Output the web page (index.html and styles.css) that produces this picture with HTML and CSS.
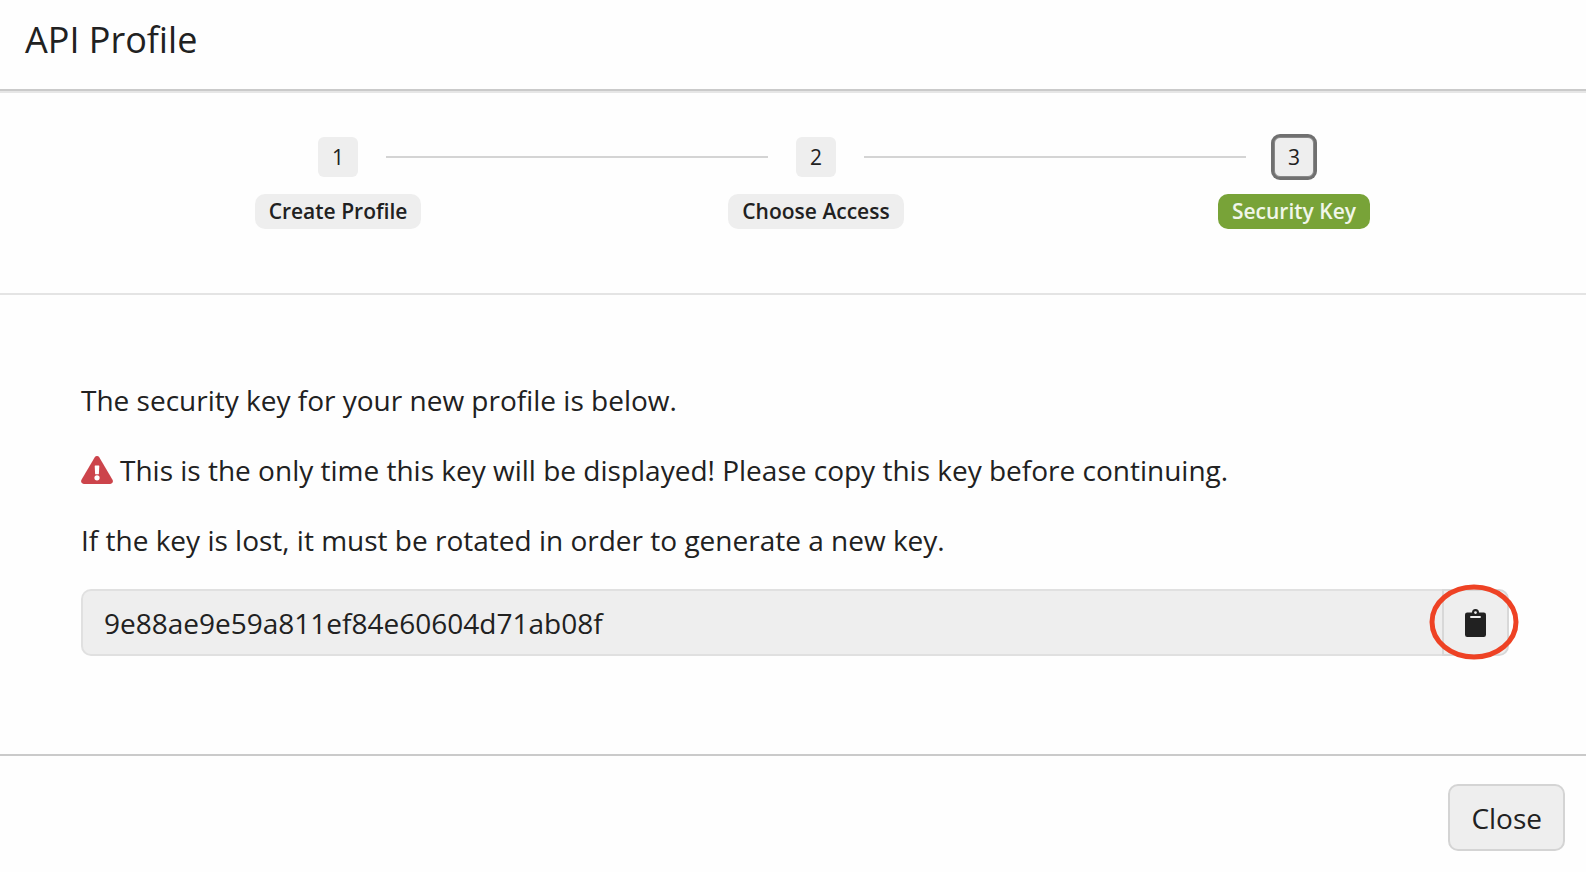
FILE: index.html
```html
<!DOCTYPE html>
<html lang="en">
<head>
    <meta charset="UTF-8">
    <title>API Profile</title>
    <link rel="stylesheet" href="styles.css">
</head>
<body>

<header class="header">
    <h1>API Profile</h1>
</header>

<!-- Progress -->
<ol class="steps">
    <li class="step">
        <div class="marker"><span class="number">1</span></div>
        <span class="label">Create Profile</span>
    </li>
    <li class="step">
        <div class="marker"><span class="number">2</span></div>
        <span class="label">Choose Access</span>
    </li>
    <li class="step active" aria-current="step">
        <div class="marker"><span class="number">3</span></div>
        <span class="label">Security Key</span>
    </li>
</ol>

<main class="content">
    <p><label for="key">The security key for your new profile is below.</label></p>
    <p class="warning">
        <svg class="warning-icon" viewBox="0 0 32 28" aria-hidden="true">
            <path fill="#cc444b" d="M13.6 1.4a2.8 2.8 0 0 1 4.8 0l13.1 22.4a2.8 2.8 0 0 1-2.4 4.2H2.9a2.8 2.8 0 0 1-2.4-4.2z"/>
            <path fill="#fff" d="M14.2 9.5h3.6a.5.5 0 0 1 .5.5l-.4 7.8a.6.6 0 0 1-.6.5h-2.6a.6.6 0 0 1-.6-.5L13.7 10a.5.5 0 0 1 .5-.5z"/>
            <circle fill="#fff" cx="16" cy="21.8" r="2.6"/>
        </svg>
        <span>This is the only time this key will be displayed! Please copy this key before continuing.</span>
    </p>
    <p>If the key is lost, it must be rotated in order to generate a new key.</p>

    <div class="key-group">
        <input type="text" id="key" class="key" value="9e88ae9e59a811ef84e60604d71ab08f" readonly>
        <button type="button" class="copy" aria-label="Copy key">
            <svg class="copy-icon" viewBox="0 0 21 28" aria-hidden="true">
                <path fill="#212121" fill-rule="evenodd" d="M2.2 3.5h4.8a3.5 3.5 0 0 1 7 0h4.8A2.2 2.2 0 0 1 21 5.7v20.1a2.2 2.2 0 0 1-2.2 2.2H2.2A2.2 2.2 0 0 1 0 25.8V5.7a2.2 2.2 0 0 1 2.2-2.2zM10.5 2.2a1.4 1.4 0 1 0 0 2.8 1.4 1.4 0 0 0 0-2.8zM5.7 7a.5.5 0 0 0-.5.5v.9c0 .3.2.5.5.5h9.6c.3 0 .5-.2.5-.5v-.9a.5.5 0 0 0-.5-.5z"/>
            </svg>
        </button>
        <svg class="highlight" viewBox="0 0 90 76" aria-hidden="true">
            <ellipse cx="45" cy="38" rx="42" ry="35" fill="none" stroke="#ee4224" stroke-width="5"/>
        </svg>
    </div>
</main>

<footer class="footer">
    <button type="button" class="close">Close</button>
</footer>

</body>
</html>
```

FILE: styles.css
```css
* {
    box-sizing: border-box;
}
body {
    margin: 0;
    font-family: "Open Sans", sans-serif;
    font-size: 28px;
    line-height: 42px;
    color: #212121;
    background-color: #fefefe;
}
.header {
    padding: 16px 25px 26px;
    border-bottom: 2px solid #cacaca;
    box-shadow: 0 2px 0 #e6e6e6;
}
h1 {
    margin: 0;
    font-size: 36px;
    line-height: 47px;
    font-weight: 500;
}
/* Steps */
.steps {
    display: grid;
    grid-template-columns: repeat(3, 1fr);
    margin: 0;
    padding: 46px 53px 64px 99px;
    list-style: none;
    border-bottom: 2px solid #e4e4e4;
}
.step {
    display: flex;
    flex-direction: column;
    align-items: center;
    gap: 17px;
    font-size: 21px;
}
.marker {
    display: flex;
    align-items: center;
    gap: 28px;
    width: 100%;
}
.marker::before, .marker::after {
    content: "";
    flex: 1;
    height: 2px;
    background-color: #d4d4d4;
}
.step:first-child .marker::before,
.step:last-child .marker::after {
    background-color: transparent;
}
.number {
    width: 40px;
    height: 40px;
    border-radius: 6px;
    line-height: 40px;
    text-align: center;
    background-color: #eee;
}
.label {
    padding: 0 14px;
    border-radius: 10px;
    line-height: 35px;
    font-weight: 600;
    background-color: #eee;
}
.active .number {
    border: 1px solid #888;
    line-height: 38px;
    box-shadow: 0 0 0 3px #707070;
}
.active .label {
    color: #f1f6ea;
    background-color: #78a338;
}
/* Key */
.content {
    padding: 84px 77px 98px 81px;
}
p {
    margin: 0 0 28px;
}
.warning {
    display: flex;
    align-items: center;
    gap: 7px;
}
.warning-icon {
    flex: none;
    width: 32px;
    height: 28px;
}
.key-group {
    position: relative;
    display: flex;
    height: 67px;
}
.key, .copy, .close {
    font: inherit;
    color: inherit;
    background-color: #eee;
}
.key {
    flex: 1;
    min-width: 0;
    padding: 0 21px;
    border: 2px solid #e0e0e0;
    border-right: none;
    border-radius: 10px 0 0 10px;
}
.copy {
    display: flex;
    align-items: center;
    justify-content: center;
    width: 67px;
    padding: 0;
    border: 2px solid #d8d8d8;
    border-radius: 0 10px 10px 0;
    cursor: pointer;
}
.copy-icon {
    width: 21px;
    height: 28px;
}
/* Red ring around the copy button */
.highlight {
    position: absolute;
    top: -5px;
    right: -10px;
    width: 90px;
    height: 76px;
    pointer-events: none;
}
.footer {
    display: flex;
    justify-content: flex-end;
    padding: 28px 21px 21px;
    border-top: 2px solid #cacaca;
}
.close {
    height: 67px;
    padding: 0 21px;
    border: 2px solid #d4d4d4;
    border-radius: 10px;
    cursor: pointer;
}
```
